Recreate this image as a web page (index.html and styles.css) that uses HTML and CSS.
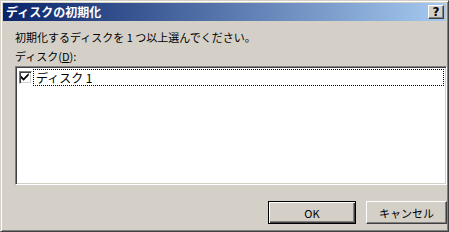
FILE: index.html
```html
<!DOCTYPE html>
<html lang="ja">
<head>
<meta charset="utf-8">
<link rel="stylesheet" href="styles.css">
</head>
<body>
<div class="window">
  <div class="titlebar">
    <span class="title">ディスクの初期化</span>
    <span class="help">?</span>
  </div>
  <div class="content">
    <div class="msg">初期化するディスクを 1 つ以上選んでください。</div>
    <div class="label">ディスク(<u>D</u>):</div>
    <div class="listbox">
      <div class="item">
        <span class="check">
          <svg width="9" height="9" viewBox="0 0 7 7"><path d="M0 2 L2 4 L6 0 L6 2 L2 6 L0 4 Z" fill="#000"/></svg>
        </span>
        <span class="itemtext">ディスク 1</span>
      </div>
    </div>
    <div class="buttons">
      <button class="btn ok default">OK</button>
      <button class="btn cancel">キャンセル</button>
    </div>
  </div>
</div>
</body>
</html>
```
FILE: styles.css
```css
html, body {
  margin: 0;
  padding: 0;
  background: #d4d0c8;
}
body {
  width: 449px;
  height: 232px;
  overflow: hidden;
  font-family: "Noto Sans CJK JP", "Noto Sans", sans-serif;
  font-size: 11px;
  color: #000;
}
.window {
  box-sizing: border-box;
  width: 449px;
  height: 232px;
  background: #d4d0c8;
  border-top: 1px solid #d4d0c8;
  border-left: 1px solid #d4d0c8;
  border-right: 1px solid #404040;
  border-bottom: 1px solid #404040;
  box-shadow: inset 1px 1px 0 #fff, inset -1px -1px 0 #808080;
  padding: 2px 1px 2px 2px;
  display: flex;
  flex-direction: column;
}
.titlebar {
  height: 18px;
  flex: none;
  display: flex;
  align-items: center;
  justify-content: space-between;
  background: linear-gradient(to right, #0a246a, #a6caf0);
  padding: 0 2px 0 3px;
  margin-right: 1px;
}
.title {
  color: #fff;
  font-weight: bold;
  font-size: 12px;
  line-height: 18px;
}
.help {
  box-sizing: border-box;
  width: 16px;
  height: 14px;
  background: #d4d0c8;
  border-top: 1px solid #fff;
  border-left: 1px solid #fff;
  border-right: 1px solid #404040;
  border-bottom: 1px solid #404040;
  box-shadow: inset -1px -1px 0 #808080;
  font-family: "DejaVu Sans", sans-serif;
  font-weight: bold;
  font-size: 12px;
  line-height: 12px;
  text-align: center;
}
.content {
  flex: 1;
  padding: 9px 0 0 12px;
  display: flex;
  flex-direction: column;
}
.msg {
  line-height: 14px;
  height: 14px;
}
.label {
  line-height: 14px;
  height: 14px;
  margin-top: 5px;
}
.label u {
  text-decoration: underline;
}
.listbox {
  box-sizing: border-box;
  height: 119px;
  margin-top: 3px;
  background: #fff;
  border-top: 1px solid #808080;
  border-left: 1px solid #808080;
  border-right: 1px solid #fff;
  border-bottom: 1px solid #fff;
  box-shadow: inset 1px 1px 0 #404040, inset -1px -1px 0 #d4d0c8;
  padding: 2px 2px 0 2px;
}
.item {
  display: flex;
  align-items: center;
  height: 17px;
}
.check {
  box-sizing: border-box;
  width: 13px;
  height: 13px;
  flex: none;
  margin-left: 1px;
  background: #fff;
  border-top: 1px solid #808080;
  border-left: 1px solid #808080;
  border-right: 1px solid #fff;
  border-bottom: 1px solid #fff;
  box-shadow: inset 1px 1px 0 #404040, inset -1px -1px 0 #d4d0c8;
  display: flex;
  align-items: center;
  justify-content: center;
}
.itemtext {
  flex: 1;
  box-sizing: border-box;
  height: 17px;
  margin-left: 1px;
  padding-left: 2px;
  line-height: 15px;
  font-size: 12px;
  border: 1px dotted #000;
}
.buttons {
  display: flex;
  justify-content: flex-end;
  gap: 10px;
  margin-top: 16px;
}
.btn {
  box-sizing: border-box;
  height: 23px;
  padding: 0;
  background: #d4d0c8;
  font-family: "Noto Sans CJK JP", "Noto Sans", sans-serif;
  font-size: 11px;
  color: #000;
  border-top: 1px solid #fff;
  border-left: 1px solid #fff;
  border-right: 1px solid #404040;
  border-bottom: 1px solid #404040;
  box-shadow: inset -1px -1px 0 #808080;
}
.btn.ok {
  width: 88px;
}
.btn.cancel {
  width: 81px;
}
.btn.default {
  border: 1px solid #000;
  box-shadow: inset 1px 1px 0 #fff, inset -1px -1px 0 #404040, inset -2px -2px 0 #808080;
}
```
